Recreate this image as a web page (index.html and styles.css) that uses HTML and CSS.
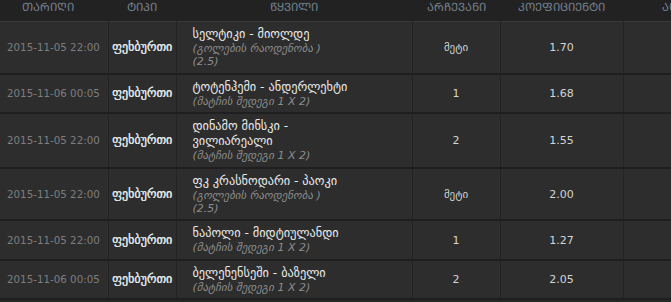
FILE: index.html
```html
<!DOCTYPE html>
<html lang="ka">
<head>
<meta charset="utf-8">
<link rel="stylesheet" href="styles.css">
</head>
<body>
<table class="bets">
  <colgroup>
    <col class="c-date"><col class="c-type"><col class="c-event"><col class="c-pick"><col class="c-odds"><col class="c-more">
  </colgroup>
  <thead>
    <tr>
      <th class="h-date">&#x1C97;&#x1C90;&#x1CA0;&#x1C98;&#x1CA6;&#x1C98;</th>
      <th>&#x1CA2;&#x1C98;&#x1C9E;&#x1C98;</th>
      <th>&#x1CAC;&#x1CA7;&#x1C95;&#x1C98;&#x1C9A;&#x1C98;</th>
      <th>&#x1C90;&#x1CA0;&#x1CA9;&#x1C94;&#x1C95;&#x1C90;&#x1C9C;&#x1C98;</th>
      <th>&#x1C99;&#x1C9D;&#x1C94;&#x1CA4;&#x1C98;&#x1CAA;&#x1C98;&#x1C94;&#x1C9C;&#x1CA2;&#x1C98;</th>
      <th>&#x1C90;&#x1C9C;&#x1C92;&#x1C90;&#x1CA0;&#x1C98;&#x1CA8;&#x1C98;</th>
    </tr>
  </thead>
  <tbody>
    <tr>
      <td class="date">2015-11-05 22:00</td>
      <td class="type">ფეხბურთი</td>
      <td class="event"><div class="name">სელტიკი - მიოლდე</div><div class="sub">(გოლების რაოდენობა )<br>(2.5)</div></td>
      <td class="num">მეტი</td>
      <td class="num">1.70</td>
      <td></td>
    </tr>
    <tr>
      <td class="date">2015-11-06 00:05</td>
      <td class="type">ფეხბურთი</td>
      <td class="event"><div class="name">ტოტენჰემი - ანდერლეხტი</div><div class="sub">(მატჩის შედეგი 1 X 2)</div></td>
      <td class="num">1</td>
      <td class="num">1.68</td>
      <td></td>
    </tr>
    <tr>
      <td class="date">2015-11-05 22:00</td>
      <td class="type">ფეხბურთი</td>
      <td class="event"><div class="name">დინამო მინსკი -<br>ვილიარეალი</div><div class="sub">(მატჩის შედეგი 1 X 2)</div></td>
      <td class="num">2</td>
      <td class="num">1.55</td>
      <td></td>
    </tr>
    <tr>
      <td class="date">2015-11-05 22:00</td>
      <td class="type">ფეხბურთი</td>
      <td class="event"><div class="name">ფკ კრასნოდარი - პაოკი</div><div class="sub">(გოლების რაოდენობა )<br>(2.5)</div></td>
      <td class="num">მეტი</td>
      <td class="num">2.00</td>
      <td></td>
    </tr>
    <tr>
      <td class="date">2015-11-05 22:00</td>
      <td class="type">ფეხბურთი</td>
      <td class="event"><div class="name">ნაპოლი - მიდტიულანდი</div><div class="sub">(მატჩის შედეგი 1 X 2)</div></td>
      <td class="num">1</td>
      <td class="num">1.27</td>
      <td></td>
    </tr>
    <tr>
      <td class="date">2015-11-06 00:05</td>
      <td class="type">ფეხბურთი</td>
      <td class="event"><div class="name">ბელენენსეში - ბაზელი</div><div class="sub">(მატჩის შედეგი 1 X 2)</div></td>
      <td class="num">2</td>
      <td class="num">2.05</td>
      <td></td>
    </tr>
  </tbody>
</table>
</body>
</html>
```

FILE: styles.css
```css
html, body {
  margin: 0;
  padding: 0;
  overflow: hidden;
  background: #272727;
}
body {
  font-family: "DejaVu Sans", "Noto Sans", sans-serif;
  font-size: 12px;
  color: #dcdcdc;
}
.bets {
  border-collapse: collapse;
  table-layout: fixed;
  width: 760px;
}
.c-date { width: 108px; }
.c-type { width: 68px; }
.c-event { width: 236px; }
.c-pick { width: 88px; }
.c-odds { width: 123px; }
.c-more { width: 137px; }

.bets th {
  background: #222222;
  color: #73808c;
  font-weight: normal;
  font-size: 11.5px;
  text-align: center;
  height: 13px;
  padding: 1px 0 7px;
  line-height: 13px;
  white-space: nowrap;
  overflow: hidden;
  vertical-align: top;
}
.bets th.h-date {
  padding-right: 12px;
}
.bets td {
  background: #2d2d2d;
  border-top: 1px solid #393939;
  border-bottom: 2px solid #1f1f1f;
  border-right: 1px solid #232323;
  padding: 5px 4px 4.5px;
  vertical-align: middle;
  line-height: 13px;
}
.bets td.date {
  color: #7e7e7e;
  font-size: 10.3px;
  padding-left: 7px;
  white-space: nowrap;
}
.bets td.type {
  font-size: 12px;
  color: #dfe4e8;
  text-shadow: 0.4px 0 0 #dfe4e8;
  padding-left: 2px;
  padding-right: 2px;
  text-align: center;
  white-space: nowrap;
}
.bets td.event {
  padding-left: 16px;
}
.event .name {
  color: #eaeaea;
  font-size: 12.3px;
  line-height: 15px;
}
.event .sub {
  color: #8c8c8c;
  font-style: italic;
  font-size: 11px;
  line-height: 13px;
}
.bets td.num {
  text-align: center;
  font-size: 11px;
  color: #d4d4d4;
}
```
